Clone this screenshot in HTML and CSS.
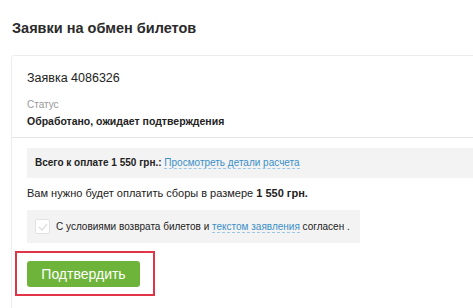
FILE: index.html
```html
<!DOCTYPE html>
<html>

<head>
  <title>Заявки на обмен билетов</title>
  <link rel="stylesheet" href="styles.css">
</head>

<body>

  <h1 class="page-title">Заявки на обмен билетов</h1>

  <div class="card">
    <div class="card-head">
      <div class="order-num">Заявка 4086326</div>
      <div class="status-label">Статус</div>
      <div class="status-value">Обработано, ожидает подтверждения</div>
    </div>

    <div class="card-body">
      <div class="total-box">
        <b>Всего к оплате 1 550 грн.:</b> <a href="#" class="dash-link">Просмотреть детали расчета</a>
      </div>

      <p class="fee-note">Вам нужно будет оплатить сборы в размере <b>1 550 грн.</b></p>

      <div class="agree-box">
        <span class="check">
          <svg width="10" height="8" viewBox="0 0 10 8"><path d="M1 4 L4 7 L9 1" fill="none" stroke="#ddd" stroke-width="1.3"/></svg>
        </span>
        <span>С условиями возврата билетов и <a href="#" class="dash-link">текстом заявления</a> согласен .</span>
      </div>

      <div class="confirm-wrap">
        <button class="confirm-btn">Подтвердить</button>
      </div>
    </div>
  </div>

</body>

</html>
```

FILE: styles.css
```css
body {
  margin: 0;
  background: white;
  font-family: "Liberation Sans", Arial, sans-serif;
  color: #333;
  overflow: hidden;
}

.page-title {
  margin: 0;
  padding: 20px 0 0 12px;
  height: 35px;
  font-size: 14.5px;
  font-weight: bold;
  color: #2b2b2b;
}

.card {
  margin-left: 11px;
  width: 480px;
  height: 260px;
  border: 1px solid #ececec;
  border-radius: 3px;
}

.card-head {
  padding: 15px 0 0 15px;
  height: 66px;
  border-bottom: 1px solid #e6e6e6;
}

.order-num {
  font-size: 12.5px;
  color: #222;
}

.status-label {
  margin-top: 14px;
  font-size: 10px;
  color: #999;
}

.status-value {
  margin-top: 5px;
  font-size: 10.5px;
  font-weight: bold;
  color: #222;
}

.card-body {
  padding: 10px 0 0 15px;
}

.total-box {
  background: #f3f3f3;
  height: 30px;
  line-height: 30px;
  padding-left: 8px;
  font-size: 10px;
  color: #222;
}

.dash-link {
  color: #3a8fc8;
  text-decoration: none;
  border-bottom: 1px dashed #9cc7e4;
}

.fee-note {
  margin: 0;
  height: 32px;
  line-height: 30px;
  font-size: 11px;
  color: #222;
}

.agree-box {
  width: 325px;
  height: 33px;
  background: #f3f3f3;
  display: flex;
  align-items: center;
  gap: 6px;
  padding-left: 8px;
  font-size: 10px;
  color: #222;
  white-space: nowrap;
}

.check {
  width: 13px;
  height: 13px;
  border: 1px solid #e2e2e2;
  border-radius: 2px;
  background: white;
  display: flex;
  align-items: center;
  justify-content: center;
}

.confirm-wrap {
  margin: 8px 0 0 -12px;
  width: 140px;
  height: 45px;
  border: 2px solid #e23448;
  padding: 8px 0 0 10px;
  box-sizing: border-box;
}

.confirm-btn {
  display: block;
  width: 113px;
  height: 26px;
  background: #6fb43a;
  color: white;
  border: none;
  border-radius: 3px;
  font-family: "Liberation Sans", Arial, sans-serif;
  font-size: 14px;
  padding: 0;
}
```
